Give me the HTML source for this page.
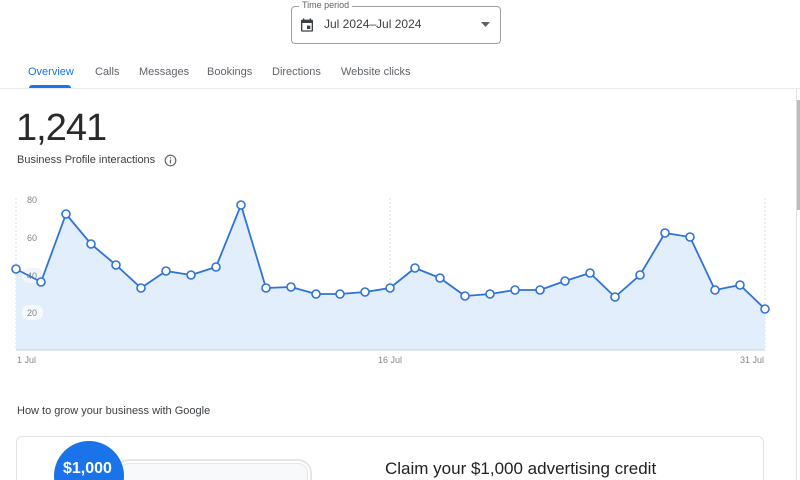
<!DOCTYPE html>
<html><head><meta charset="utf-8"><style>
*{margin:0;padding:0;box-sizing:border-box}
html,body{width:800px;height:480px;overflow:hidden}
body{background:#fff;font-family:"Liberation Sans",sans-serif;color:#202124;position:relative}
.abs{position:absolute}
.box{left:291px;top:6px;width:210px;height:38px;border:1px solid #9aa0a6;border-radius:4px}
.lbl{left:299px;top:0px;background:#fff;padding:0 3px;font-size:9px;color:#5f6368}
.tabs span{position:absolute;top:66px;font-size:11px;color:#5f6368}
</style></head><body>
<div class="abs box"></div>
<div class="abs lbl">Time period</div>
<svg class="abs" style="left:299px;top:17px" width="16" height="16" viewBox="0 0 24 24"><path fill="#3c4043" d="M19 4h-1V2h-2v2H8V2H6v2H5c-1.1 0-2 .9-2 2v14c0 1.1.9 2 2 2h14c1.1 0 2-.9 2-2V6c0-1.1-.9-2-2-2zm0 16H5V9h14v11zM12 13h5v5h-5z"/></svg>
<div class="abs" style="left:324px;top:17px;font-size:12px;color:#3c4043">Jul 2024–Jul 2024</div>
<svg class="abs" style="left:481px;top:22px" width="9" height="5"><path d="M0 0h9L4.5 5z" fill="#5f6368"/></svg>
<div class="tabs">
<span style="left:28px;color:#1a73e8">Overview</span>
<span style="left:95px">Calls</span>
<span style="left:139px">Messages</span>
<span style="left:207px">Bookings</span>
<span style="left:272px">Directions</span>
<span style="left:341px">Website clicks</span>
</div>
<div class="abs" style="left:29px;top:85px;width:42px;height:3px;background:#1a73e8;border-radius:3px 3px 0 0"></div>
<div class="abs" style="left:0;top:88px;width:800px;height:1px;background:#e8eaed"></div>
<div class="abs" style="left:796px;top:89px;width:1px;height:391px;background:#e0e0e0"></div>
<div class="abs" style="left:797px;top:100px;width:3px;height:110px;background:#bdbdbd"></div>
<div class="abs" style="left:16px;top:107px;font-size:38px;letter-spacing:-1px;color:#2a2a2a">1,241</div>
<div class="abs" style="left:17px;top:154px;font-size:11px;color:#3c4043">Business Profile interactions</div>
<svg class="abs" style="left:164px;top:154px" width="13" height="13"><circle cx="6.5" cy="6.5" r="5.3" fill="none" stroke="#5f6368" stroke-width="1.2"/><rect x="5.9" y="5.5" width="1.2" height="4" fill="#5f6368"/><rect x="5.9" y="3.3" width="1.2" height="1.2" fill="#5f6368"/></svg>
<svg class="abs" style="left:0;top:0" width="800" height="380">
<line x1="16" y1="198" x2="16" y2="350" stroke="#dadce0" stroke-dasharray="2,2"/>
<line x1="390" y1="198" x2="390" y2="350" stroke="#dadce0" stroke-dasharray="2,2"/>
<line x1="765" y1="198" x2="765" y2="350" stroke="#dadce0" stroke-dasharray="2,2"/>
<polygon fill="#e3eefd" points="16,350 16,269 41,282 66,214 91,244 116,265 141,288 166,271 191,275 216,267 241,205 266,288 291,287 316,294 340,294 365,292 390,288 415,268 440,278 465,296 490,294 515,290 540,290 565,281 590,273 615,297 640,275 665,233 690,237 715,290 740,285 765,309 765,350"/>
<line x1="16" y1="350" x2="765" y2="350" stroke="#c5cfe0"/>
<rect x="22" y="268" width="21" height="15" rx="7" fill="#f1f5fc"/>
<rect x="22" y="305" width="21" height="15" rx="7" fill="#f6f9fe"/>
<g font-size="9" fill="#80868b" font-family="Liberation Sans,sans-serif">
<text x="27" y="203">80</text><text x="27" y="241">60</text>
<text x="27" y="279">40</text><text x="27" y="316">20</text>
<text x="17" y="363">1 Jul</text><text x="378" y="363">16 Jul</text><text x="740" y="363">31 Jul</text>
</g>
<polyline fill="none" stroke="#2f73d6" stroke-width="1.8" stroke-linejoin="round" points="16,269 41,282 66,214 91,244 116,265 141,288 166,271 191,275 216,267 241,205 266,288 291,287 316,294 340,294 365,292 390,288 415,268 440,278 465,296 490,294 515,290 540,290 565,281 590,273 615,297 640,275 665,233 690,237 715,290 740,285 765,309"/>
<g fill="#fff" stroke="#2f73d6" stroke-width="1.6">
<circle cx="16" cy="269" r="4"/><circle cx="41" cy="282" r="4"/><circle cx="66" cy="214" r="4"/><circle cx="91" cy="244" r="4"/><circle cx="116" cy="265" r="4"/><circle cx="141" cy="288" r="4"/><circle cx="166" cy="271" r="4"/><circle cx="191" cy="275" r="4"/><circle cx="216" cy="267" r="4"/><circle cx="241" cy="205" r="4"/><circle cx="266" cy="288" r="4"/><circle cx="291" cy="287" r="4"/><circle cx="316" cy="294" r="4"/><circle cx="340" cy="294" r="4"/><circle cx="365" cy="292" r="4"/><circle cx="390" cy="288" r="4"/><circle cx="415" cy="268" r="4"/><circle cx="440" cy="278" r="4"/><circle cx="465" cy="296" r="4"/><circle cx="490" cy="294" r="4"/><circle cx="515" cy="290" r="4"/><circle cx="540" cy="290" r="4"/><circle cx="565" cy="281" r="4"/><circle cx="590" cy="273" r="4"/><circle cx="615" cy="297" r="4"/><circle cx="640" cy="275" r="4"/><circle cx="665" cy="233" r="4"/><circle cx="690" cy="237" r="4"/><circle cx="715" cy="290" r="4"/><circle cx="740" cy="285" r="4"/><circle cx="765" cy="309" r="4"/>
</g>
</svg>
<div class="abs" style="left:17px;top:405px;font-size:11px;color:#3c4043">How to grow your business with Google</div>
<div class="abs" style="left:16px;top:436px;width:748px;height:80px;border:1px solid #e3e3e3;border-radius:6px"></div>
<div class="abs" style="left:115px;top:459px;width:197px;height:40px;border:2px solid #e6e6e6;border-radius:14px;background:#f8f9fa;box-shadow:inset 0 0 0 2px #fff, inset 0 0 0 3px #e6e6e6"></div>
<div class="abs" style="left:54px;top:441px;width:70px;height:70px;border-radius:50%;background:#1a73e8"></div>
<div class="abs" style="left:63px;top:460px;font-size:16px;font-weight:bold;color:#fff">$1,000</div>
<div class="abs" style="left:385px;top:459px;font-size:17px;color:#202124">Claim your $1,000 advertising credit</div>
</body></html>
